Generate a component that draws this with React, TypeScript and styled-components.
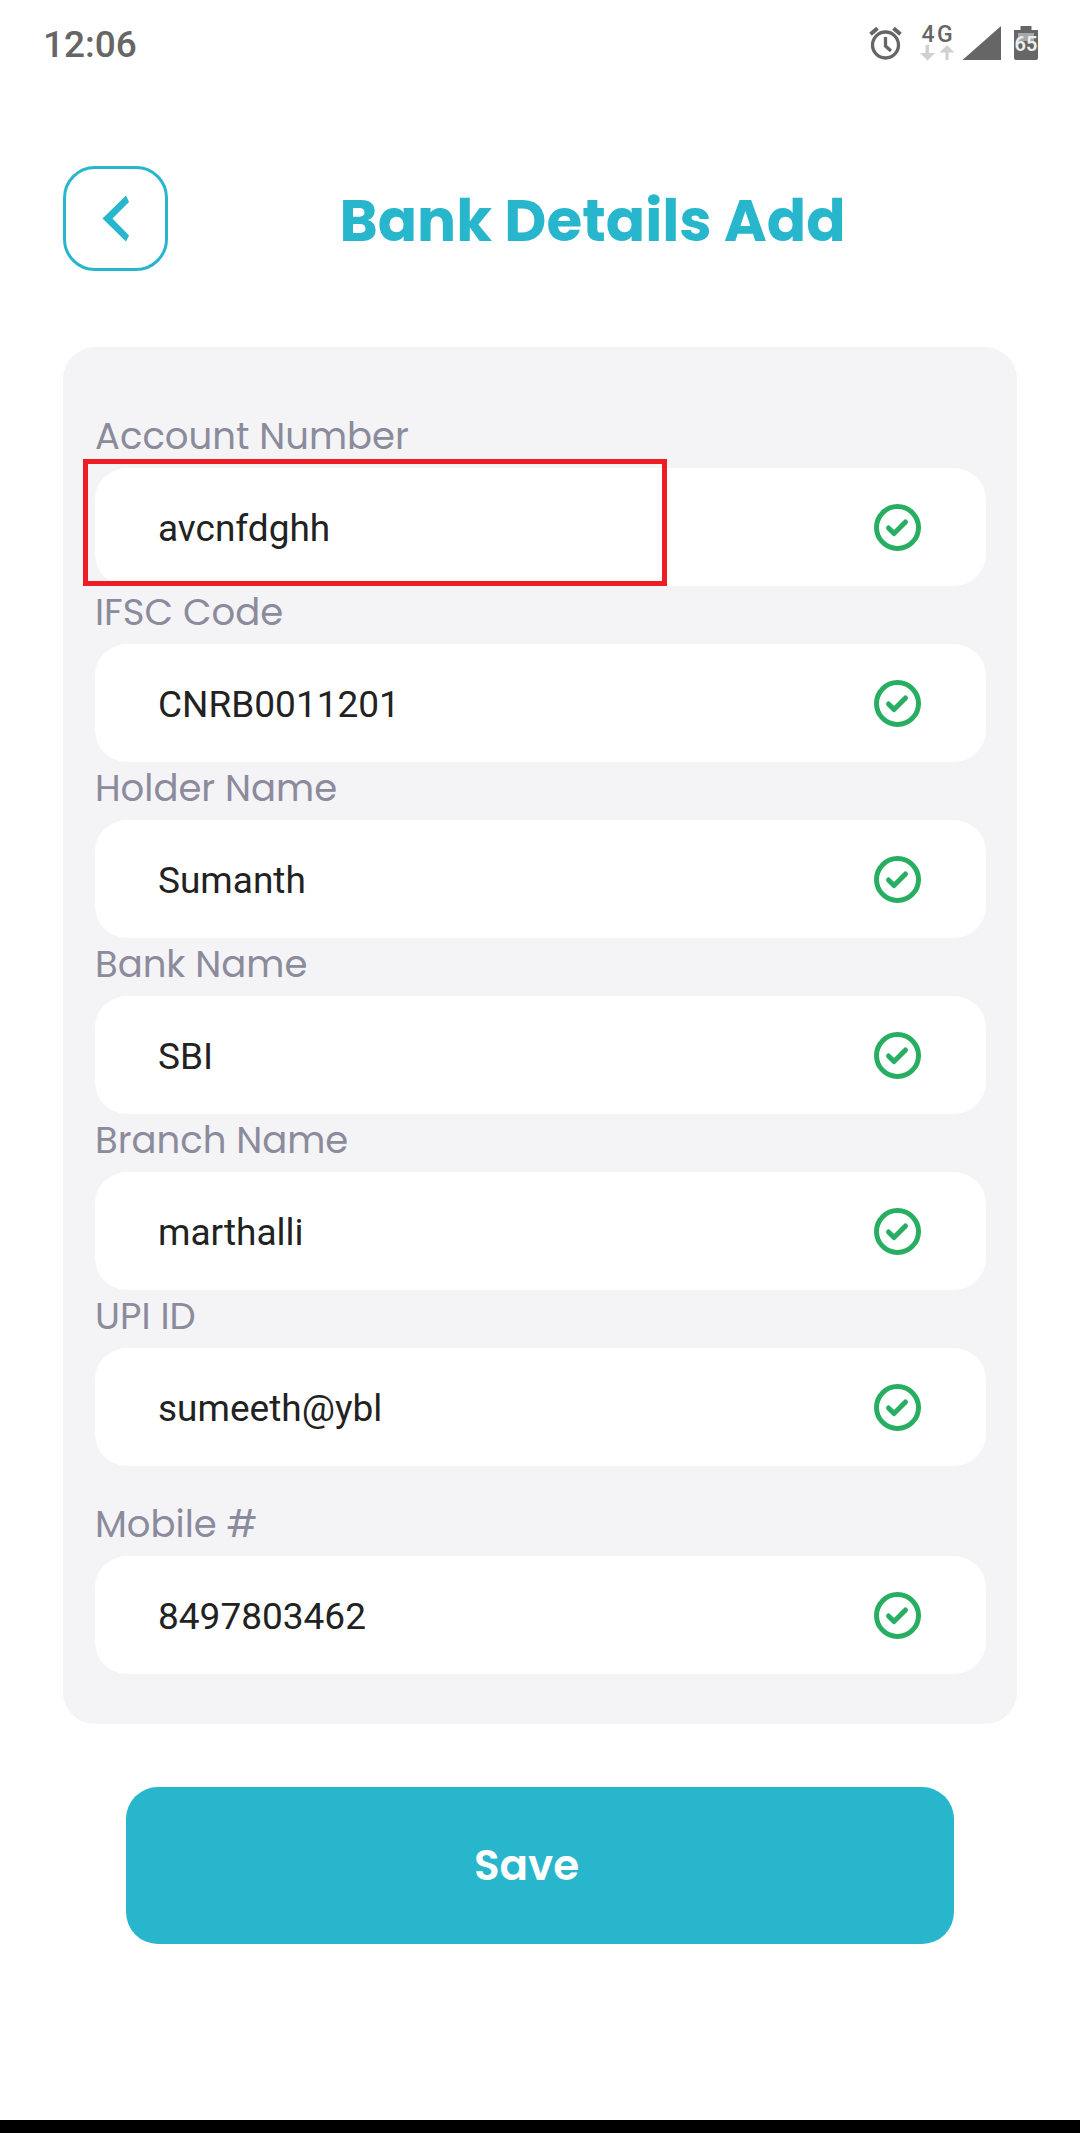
import React from "react";
import styled, { createGlobalStyle } from "styled-components";

const GlobalStyle = createGlobalStyle`
  *, *::before, *::after { box-sizing: border-box; }
  body { margin: 0; background: #fff; }
`;

const teal = "#28b6cd";
const brandFont = `Poppins, Inter, "Open Sans", sans-serif`;
const systemFont = `Roboto, "Noto Sans", sans-serif`;

const Screen = styled.div`
  display: flex;
  flex-direction: column;
  min-height: 100vh;
  background: #fff;
  font-family: ${systemFont};
`;

const StatusBar = styled.div`
  display: flex;
  align-items: center;
  justify-content: space-between;
  height: 88px;
  padding: 0 41px 0 43px;
  color: #666;
`;

const Clock = styled.time`
  padding-top: 2px;
  font-size: 37px;
  font-weight: 500;
  line-height: 44px;
`;

const StatusIcons = styled.div`
  display: flex;
  align-items: center;
`;

const Header = styled.header`
  display: flex;
  align-items: center;
  padding: 78px 63px 0;
`;

const BackButton = styled.button`
  display: flex;
  align-items: center;
  justify-content: center;
  flex: none;
  width: 105px;
  height: 105px;
  padding: 0;
  border: 3px solid ${teal};
  border-radius: 32px;
  background: none;
  cursor: pointer;
`;

const Title = styled.h1`
  flex: 1;
  margin: 0;
  padding-top: 5px;
  color: ${teal};
  font-family: ${brandFont};
  font-size: 58px;
  font-weight: 700;
  line-height: 72px;
  text-align: center;
`;

const Form = styled.form`
  display: flex;
  flex-direction: column;
`;

const Card = styled.div`
  margin: 76px 63px 0;
  padding: 63px 31px 50px 32px;
  border-radius: 32px;
  background: #f4f4f7;
`;

const Field = styled.div<{ $spaced?: boolean }>`
  position: relative;
  padding-top: ${(p) => (p.$spaced ? 32 : 0)}px;
`;

const Label = styled.label`
  display: block;
  height: 58px;
  color: #8b8b9c;
  font-family: ${brandFont};
  font-size: 37px;
  line-height: 52px;
`;

const InputBox = styled.div`
  display: flex;
  align-items: center;
  height: 118px;
  padding: 0 65px 0 63px;
  border-radius: 32px;
  background: #fff;
`;

const Input = styled.input`
  flex: 1;
  min-width: 0;
  height: 60px;
  padding: 2px 0 0;
  border: 0;
  outline: 0;
  background: none;
  color: #222;
  font-family: ${systemFont};
  font-size: 37px;
`;

const Highlight = styled.div`
  position: absolute;
  top: 49px;
  bottom: 0;
  left: -12px;
  width: 584px;
  border: 5px solid #ee1c25;
  pointer-events: none;
`;

const SaveButton = styled.button`
  height: 157px;
  margin: 63px 126px 0;
  padding: 0 27px 0 0;
  border: 0;
  border-radius: 32px;
  background: ${teal};
  color: #fff;
  font-family: ${brandFont};
  font-size: 42px;
  font-weight: 600;
  cursor: pointer;
`;

const NavigationBar = styled.div`
  height: 13px;
  margin-top: auto;
  background: #000;
`;

const CheckIcon = () => (
  <svg width="47" height="47" viewBox="0 0 47 47" fill="none" stroke="#27ae60" strokeWidth="5" aria-hidden="true">
    <circle cx="23.5" cy="23.5" r="21" />
    <path d="M14.500 24L20 29.500L31.500 18" strokeLinecap="round" strokeLinejoin="round" />
  </svg>
);

const StatusGlyphs = () => (
  <svg width="170" height="48" viewBox="0 -6 170 48" aria-hidden="true">
    <g fill="none" stroke="#666" strokeWidth="3.3">
      <circle cx="16.5" cy="19" r="13" />
      <path d="M16.500 11V20L22 25" />
      <path d="M1.500 8.200L8.500 2.200M24.500 2.200L31.500 8.200" strokeWidth="4" />
    </g>
    <g fill="#666" fontFamily="Roboto, sans-serif" fontSize="23" fontWeight="500">
      <text x="52.500" y="16">4</text>
      <text x="68" y="16">G</text>
    </g>
    <path d="M56.500 19h3.500v8h6l-7.500 7.500l-7.500 -7.500h5.500zM76.500 34h3v-7.500h6l-7.500 -7.500l-7.500 7.500h6z" fill="#d0d0d0" />
    <path d="M93.500 34L132 0V34Z" fill="#666" />
    <path d="M145 4h6.500V0h11v4h6.500v28q0 2-2 2h-20q-2 0-2-2z" fill="#666" />
    <path d="M149 7h16v8h-16z" fill="#a8a8a8" />
    <text x="157" y="25" textAnchor="middle" fill="#eee" fontFamily="Roboto, sans-serif" fontSize="20" fontWeight="600">65</text>
  </svg>
);

interface FieldData {
  id: string;
  label: string;
  value: string;
  type?: string;
  highlighted?: boolean;
  spaced?: boolean;
}

const fields: FieldData[] = [
  { id: "account", label: "Account Number", value: "avcnfdghh", highlighted: true },
  { id: "ifsc", label: "IFSC Code", value: "CNRB0011201" },
  { id: "holder", label: "Holder Name", value: "Sumanth" },
  { id: "bank", label: "Bank Name", value: "SBI" },
  { id: "branch", label: "Branch Name", value: "marthalli" },
  { id: "upi", label: "UPI ID", value: "sumeeth@ybl" },
  { id: "mobile", label: "Mobile #", value: "8497803462", type: "tel", spaced: true },
];

export default function App() {
  return (
    <Screen>
      <GlobalStyle />
      <StatusBar>
        <Clock>12:06</Clock>
        <StatusIcons>
          <StatusGlyphs />
        </StatusIcons>
      </StatusBar>
      <Header>
        <BackButton type="button" aria-label="Back">
          <svg width="28" height="47" viewBox="0 0 28 47" fill={teal} aria-hidden="true">
            <path d="M24 0.500L27 7L10.500 23.500L27 40.500L24 46.500L0.500 23.500Z" />
          </svg>
        </BackButton>
        <Title>Bank Details Add</Title>
      </Header>
      <Form onSubmit={(e) => e.preventDefault()}>
        <Card>
          {fields.map((f) => (
            <Field key={f.id} $spaced={f.spaced}>
              <Label htmlFor={f.id}>{f.label}</Label>
              <InputBox>
                <Input id={f.id} type={f.type ?? "text"} defaultValue={f.value} spellCheck={false} />
                <CheckIcon />
              </InputBox>
              {f.highlighted && <Highlight />}
            </Field>
          ))}
        </Card>
        <SaveButton type="submit">Save</SaveButton>
      </Form>
      <NavigationBar />
    </Screen>
  );
}
